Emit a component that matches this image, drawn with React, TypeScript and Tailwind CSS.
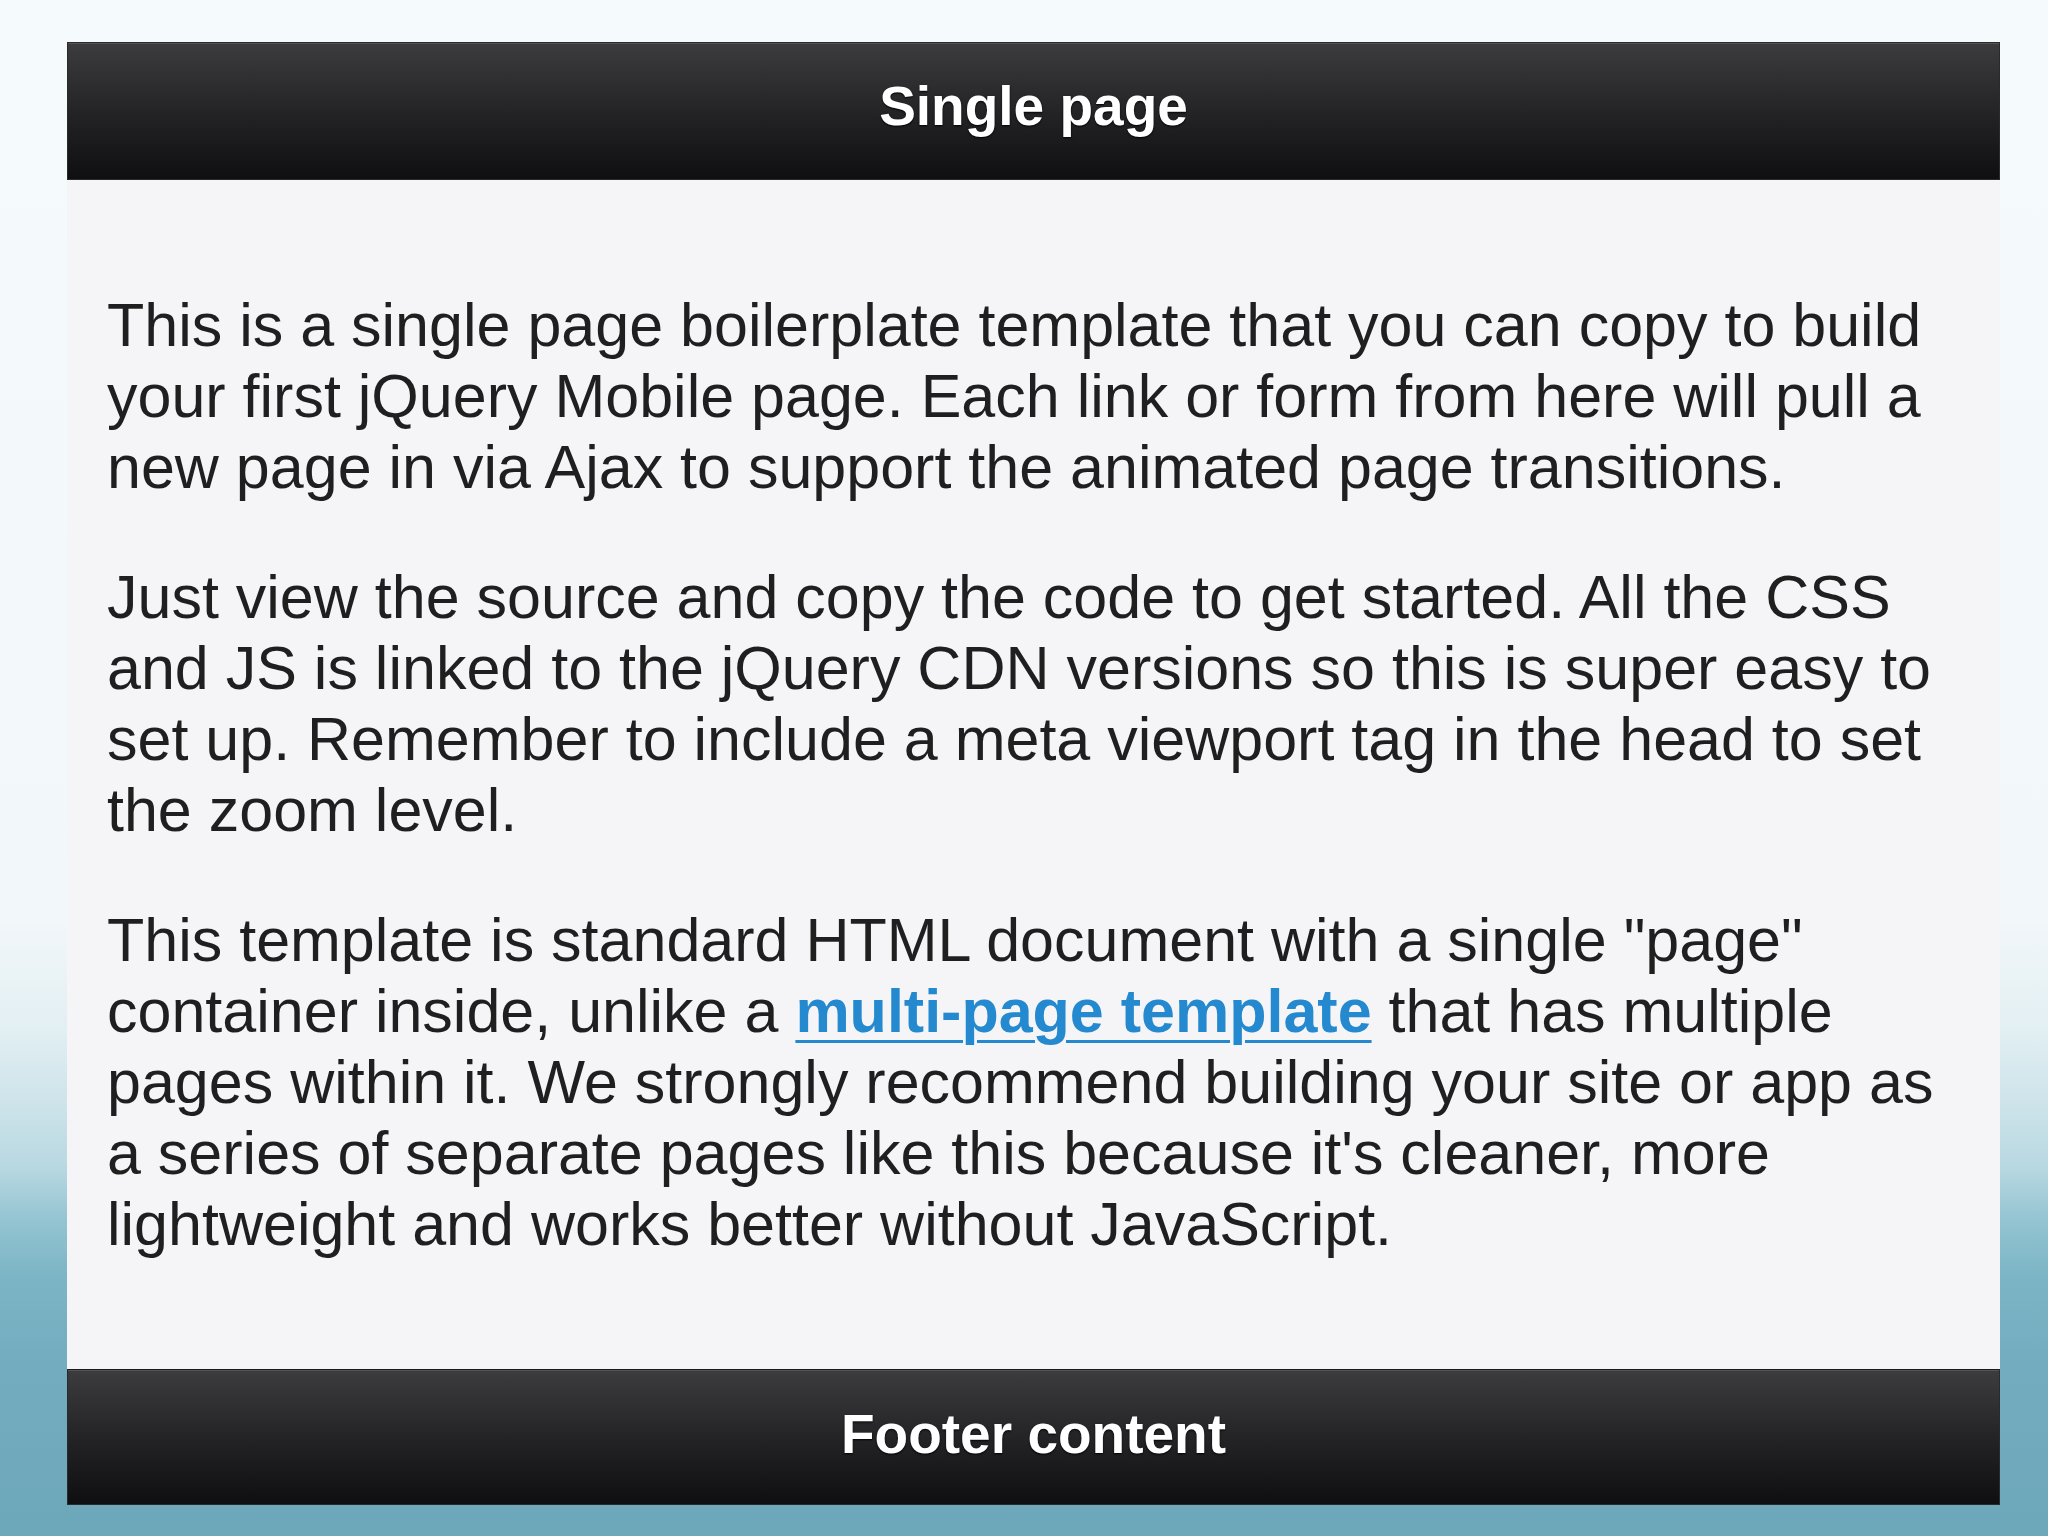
const paragraphs = [
  "This is a single page boilerplate template that you can copy to build your first jQuery Mobile page. Each link or form from here will pull a new page in via Ajax to support the animated page transitions.",
  "Just view the source and copy the code to get started. All the CSS and JS is linked to the jQuery CDN versions so this is super easy to set up. Remember to include a meta viewport tag in the head to set the zoom level.",
];

function Bar({ label, className }: { label: string; className?: string }) {
  return (
    <div
      className={`flex items-center justify-center border border-[#2a2a2a] bg-[linear-gradient(to_bottom,#3c3c3f,#242326_50%,#0f0e10)] shadow-[inset_0_1px_0_rgba(255,255,255,0.12)] ${className ?? ""}`}
    >
      <h1 className="text-[55px] font-bold leading-none text-white [text-shadow:0_1px_2px_#000]">
        {label}
      </h1>
    </div>
  );
}

export default function App() {
  return (
    <div className="h-[1536px] w-full overflow-hidden bg-[linear-gradient(to_bottom,#f5fafc_0%,#f2f7f9_60%,#e2eff3_67%,#cde3ea_72%,#b8d8e1_76%,#93c4d1_79.5%,#7cb5c6_83%,#73acbe_89%,#6da7ba_100%)] pl-[67px] pt-[42px] font-[Liberation_Sans,Arial,sans-serif]">
      <div className="flex w-[1933px] flex-col">
        <Bar label="Single page" className="h-[138px] pb-[9px]" />

        <main className="bg-[#f5f4f7] pb-[109px] pl-[40px] pt-[110px] text-[61px] leading-[71px] text-[#1f1f1f]">
          <div className="flex w-[1842px] flex-col gap-[59px]">
            {paragraphs.map((text) => (
              <p key={text.slice(0, 12)}>{text}</p>
            ))}
            <p>
              This template is standard HTML document with a single "page" container inside, unlike a{" "}
              <a href="#" className="font-bold text-[#2489ce] underline decoration-[3px] underline-offset-[8px]">
                multi-page template
              </a>{" "}
              that has multiple pages within it. We strongly recommend building your site or app as a series of
              separate pages like this because it's cleaner, more lightweight and works better without JavaScript.
            </p>
          </div>
        </main>

        <Bar label="Footer content" className="h-[136px] pb-[6px] border-t-[#1a1a1a] shadow-[0_-1px_0_#fff,inset_0_1px_0_rgba(255,255,255,0.12)]" />
      </div>
    </div>
  );
}
